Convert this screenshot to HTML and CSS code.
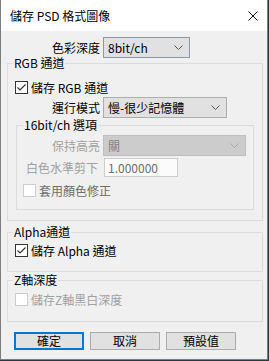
FILE: index.html
```html
<!DOCTYPE html>
<html lang="zh-Hant">
<head>
  <meta charset="UTF-8" />
  <meta name="viewport" content="width=device-width, initial-scale=1.0" />
  <title>儲存 PSD 格式圖像</title>
  <link rel="stylesheet" href="styles.css">
</head>
<body>
  <div class="window">
    <div class="titlebar">
      <span class="title">儲存 PSD 格式圖像</span>
      <svg class="close" width="10" height="10" viewBox="0 0 10 10">
        <path d="M0.5 0.5 L9.5 9.5 M9.5 0.5 L0.5 9.5" />
      </svg>
    </div>

    <div class="content">
      <!-- color depth -->
      <div class="row row-depth">
        <span class="lbl lbl-depth">色彩深度</span>
        <div class="combo combo-depth">
          <span>8bit/ch</span>
          <svg class="arrow" width="9" height="5" viewBox="0 0 9 5"><path d="M0.5 0.5 L4.5 4.5 L8.5 0.5" /></svg>
        </div>
      </div>

      <fieldset class="group group-rgb">
        <legend>RGB 通道</legend>
        <div class="check-row check-rgb">
          <span class="box">
            <svg width="11" height="11" viewBox="0 0 11 11"><path d="M1.5 5.5 L4 8 L9.5 2.5" /></svg>
          </span>
          <span>儲存 RGB 通道</span>
        </div>
        <div class="row row-mode">
          <span class="lbl lbl-mode">運行模式</span>
          <div class="combo combo-mode">
            <span>慢-很少記憶體</span>
            <svg class="arrow" width="9" height="5" viewBox="0 0 9 5"><path d="M0.5 0.5 L4.5 4.5 L8.5 0.5" /></svg>
          </div>
        </div>

        <fieldset class="group group-16">
          <legend>16bit/ch 選項</legend>
          <div class="row row-keep">
            <span class="lbl lbl-16 dim">保持高亮</span>
            <div class="combo combo-off">
              <span>關</span>
              <svg class="arrow" width="9" height="5" viewBox="0 0 9 5"><path d="M0.5 0.5 L4.5 4.5 L8.5 0.5" /></svg>
            </div>
          </div>
          <div class="row row-white">
            <span class="lbl lbl-16 lbl-white dim">白色水準剪下</span>
            <div class="field">1.000000</div>
          </div>
          <div class="check-row check-color">
            <span class="box box-off"></span>
            <span class="muted">套用顏色修正</span>
          </div>
        </fieldset>
      </fieldset>

      <fieldset class="group group-alpha">
        <legend>Alpha通道</legend>
        <div class="check-row check-alpha">
          <span class="box">
            <svg width="11" height="11" viewBox="0 0 11 11"><path d="M1.5 5.5 L4 8 L9.5 2.5" /></svg>
          </span>
          <span>儲存 Alpha 通道</span>
        </div>
      </fieldset>

      <fieldset class="group group-z">
        <legend>Z軸深度</legend>
        <div class="check-row check-z">
          <span class="box box-off"></span>
          <span class="dim">儲存Z軸黑白深度</span>
        </div>
      </fieldset>

      <div class="buttons">
        <button class="btn btn-default">確定</button>
        <button class="btn">取消</button>
        <button class="btn">預設值</button>
      </div>
    </div>
  </div>
</body>
</html>
```
FILE: styles.css
```css
/* Base */
* { box-sizing: border-box; margin: 0; padding: 0; }
body {
  background: #2e3440;
  font-family: "Noto Sans CJK TC", "Noto Sans", sans-serif;
  font-size: 12px;
  color: #000;
  width: 269px;
  height: 361px;
  overflow: hidden;
}

/* Dialog window */
.window {
  width: 268px;
  height: 360px;
  background: #f0f0f0;
  border: 1px solid #7d7d7d;
  border-top: none;
}
.titlebar {
  height: 31px;
  background: #fff;
  display: flex;
  align-items: center;
  justify-content: space-between;
  padding: 0 9px 0 9px;
}
.title { line-height: 14px; }
.close path { stroke: #111; stroke-width: 1; fill: none; }

.content {
  padding-top: 6px;
}

/* Rows with a label and a control */
.row {
  display: flex;
  align-items: center;
}
.lbl {
  text-align: right;
  line-height: 14px;
  white-space: nowrap;
}
.lbl-depth { width: 99px; margin-right: 3px; }
.lbl-mode { width: 87px; margin-right: 3px; }
.lbl-16 { width: 77px; margin-right: 3px; }
.lbl-white { padding-right: 2px; margin-right: 4px; }
.dim { color: #a0a0a0; }
.muted { color: #6d6d6d; }

/* Combo boxes */
.combo {
  height: 21px;
  display: flex;
  align-items: center;
  justify-content: space-between;
  padding: 0 6px 0 4px;
  background: #e1e1e1;
  border: 1px solid #adadad;
  line-height: 14px;
}
.combo .arrow path { stroke: #555; stroke-width: 1; fill: none; }
.combo-depth { width: 87px; border-color: #8a99a8; }
.combo-mode { width: 124px; }
.combo-off {
  width: 143px;
  background: #cccccc;
  border-color: #bfbfbf;
  color: #838383;
}
.combo-off .arrow path { stroke: #a8a8a8; }

.field {
  width: 74px;
  height: 19px;
  background: #fbfbfb;
  border: 1px solid #cdcdcd;
  color: #6d6d6d;
  padding-left: 3px;
  line-height: 17px;
}

/* Group boxes */
.group {
  border: 1px solid #dcdcdc;
  min-width: 0;
}
.group legend {
  padding: 0 1px;
  line-height: 12px;
}
.group-rgb {
  width: 256px;
  margin: -1px 0 0 6px;
  padding: 0 0 10px 5px;
}
.group-16 {
  width: 238px;
  margin: 1px 0 0 3px;
  padding: 0 0 12px 6px;
}
.group-alpha {
  width: 256px;
  margin: 5px 0 0 6px;
  padding: 0 0 14px 5px;
}
.group-z {
  width: 256px;
  margin: 2px 0 0 6px;
  padding: 0 0 15px 5px;
}

.row-mode { margin-top: 3px; }
.row-keep { margin-top: 4px; }
.row-white { margin-top: 2px; }

/* Checkboxes */
.check-row {
  display: flex;
  align-items: center;
  height: 13px;
  line-height: 14px;
}
.box {
  width: 13px;
  height: 13px;
  border: 1px solid #333;
  background: #fff;
  margin-right: 3px;
  display: flex;
  align-items: center;
  justify-content: center;
}
.box path { stroke: #333; stroke-width: 1.2; fill: none; }
.box-off { border-color: #cccccc; }
.check-rgb { margin: 12px 0 0 2px; }
.check-color { margin: 7px 0 0 0; }
.check-alpha { margin: 6px 0 0 2px; }
.check-z { margin: 7px 0 0 2px; }

/* Buttons */
.buttons {
  display: flex;
  gap: 6px;
  margin: 10px 0 0 13px;
}
.btn {
  width: 70px;
  height: 18px;
  font-family: inherit;
  font-size: 12px;
  line-height: 14px;
  background: #e1e1e1;
  border: 1px solid #adadad;
  color: #000;
}
.btn-default { border: 2px solid #0078d7; }
```
